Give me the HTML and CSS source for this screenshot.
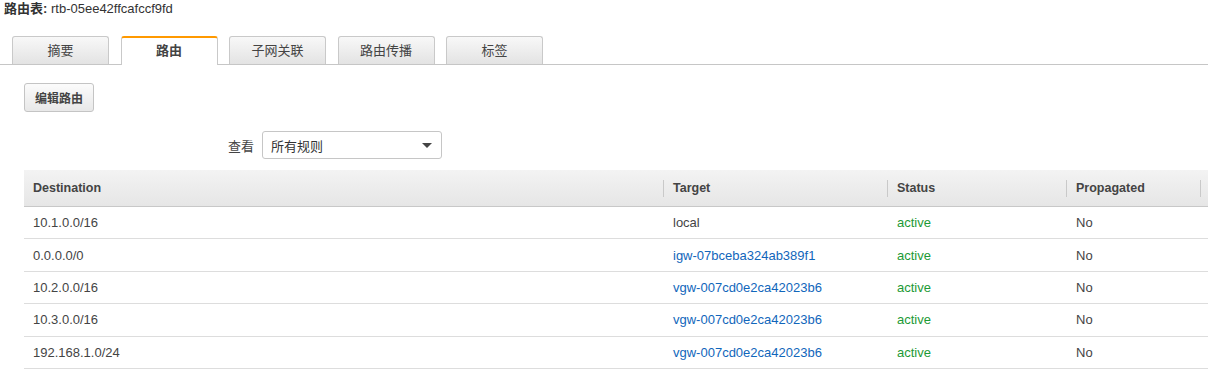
FILE: index.html
```html
<!DOCTYPE html>
<html lang="zh-CN">
<head>
    <meta charset="UTF-8">
    <title>路由表</title>
    <link rel="stylesheet" href="styles.css">
</head>
<body>
    <div class="title"><strong>路由表:</strong> rtb-05ee42ffcafccf9fd</div>

    <!-- Tabs -->
    <div class="tabs">
        <div class="tab">摘要</div>
        <div class="tab active">路由</div>
        <div class="tab">子网关联</div>
        <div class="tab">路由传播</div>
        <div class="tab">标签</div>
    </div>

    <div class="content">
        <button class="btn">编辑路由</button>

        <div class="filter">
            <label>查看</label>
            <div class="select">
                <span>所有规则</span>
                <span class="caret"></span>
            </div>
        </div>

        <table class="routes">
            <colgroup>
                <col style="width: 639px">
                <col style="width: 224px">
                <col style="width: 179px">
                <col style="width: 134px">
                <col>
            </colgroup>
            <thead>
                <tr>
                    <th><div class="th first">Destination</div></th>
                    <th><div class="th">Target</div></th>
                    <th><div class="th">Status</div></th>
                    <th><div class="th">Propagated</div></th>
                    <th><div class="th"></div></th>
                </tr>
            </thead>
            <tbody>
                <tr>
                    <td>10.1.0.0/16</td>
                    <td>local</td>
                    <td class="active">active</td>
                    <td>No</td>
                    <td></td>
                </tr>
                <tr>
                    <td>0.0.0.0/0</td>
                    <td><a href="#">igw-07bceba324ab389f1</a></td>
                    <td class="active">active</td>
                    <td>No</td>
                    <td></td>
                </tr>
                <tr>
                    <td>10.2.0.0/16</td>
                    <td><a href="#">vgw-007cd0e2ca42023b6</a></td>
                    <td class="active">active</td>
                    <td>No</td>
                    <td></td>
                </tr>
                <tr>
                    <td>10.3.0.0/16</td>
                    <td><a href="#">vgw-007cd0e2ca42023b6</a></td>
                    <td class="active">active</td>
                    <td>No</td>
                    <td></td>
                </tr>
                <tr>
                    <td>192.168.1.0/24</td>
                    <td><a href="#">vgw-007cd0e2ca42023b6</a></td>
                    <td class="active">active</td>
                    <td>No</td>
                    <td></td>
                </tr>
            </tbody>
        </table>
    </div>
</body>
</html>
```

FILE: styles.css
```css
body {
    font-family: 'Liberation Sans', Arial, 'Noto Sans CJK SC', sans-serif;
    font-size: 13px;
    color: #444;
    background: #fff;
    margin: 0;
    padding: 0;
}
.title {
    line-height: 18px;
    padding: 0 4px;
    color: #333;
}
.tabs {
    display: flex;
    gap: 11.5px;
    margin-top: 18px;
    padding-left: 12px;
    border-bottom: 1px solid #c6c6c6;
}
.tab {
    width: 95px;
    height: 27px;
    line-height: 27px;
    text-align: center;
    font-size: 13px;
    color: #444;
    border: 1px solid #c9c9c9;
    border-bottom: none;
    border-radius: 3px 3px 0 0;
    background: linear-gradient(#f8f8f8, #e3e3e3);
}
.tab.active {
    background: #fff;
    border-top: 2px solid #f90;
    height: 27px;
    line-height: 26px;
    margin-bottom: -1px;
    font-weight: bold;
}
.content {
    padding-left: 24px;
}
.btn {
    margin-top: 18px;
    height: 29px;
    padding: 0 10px;
    font-family: inherit;
    font-size: 12px;
    font-weight: bold;
    color: #444;
    border: 1px solid #c4c4c4;
    border-radius: 3px;
    background: linear-gradient(#fbfbfb, #e8e8e8);
    display: block;
}
.filter {
    display: flex;
    align-items: center;
    gap: 8px;
    margin-top: 19px;
    margin-left: 204px;
}
.filter label {
    font-size: 13px;
    color: #444;
}
.select {
    height: 26px;
    border: 1px solid #c6c6c6;
    border-radius: 3px;
    display: flex;
    align-items: center;
    justify-content: space-between;
    padding: 0 0 0 8px;
    width: 170px;
    font-size: 13px;
    color: #333;
}
.caret {
    width: 0;
    height: 0;
    border-left: 5px solid transparent;
    border-right: 5px solid transparent;
    border-top: 5px solid #444;
    margin-right: 9px;
}
.routes {
    margin-top: 11px;
    width: 100%;
    border-collapse: collapse;
    table-layout: fixed;
}
.routes thead tr {
    background: linear-gradient(#f3f3f3, #e6e6e6);
    border-bottom: 1px solid #c8c8c8;
}
.routes th {
    padding: 10px 0 9px;
    text-align: left;
    font-size: 12.5px;
    font-weight: bold;
    color: #444;
}
.th {
    border-left: 1px solid #c9c9c9;
    padding-left: 9px;
    line-height: 17px;
    height: 17px;
}
.th.first {
    border-left: none;
}
.routes td {
    height: 31.4px;
    padding: 0 9px 0 10px;
    border-bottom: 1px solid #ddd;
    white-space: nowrap;
}
.routes td:first-child {
    padding-left: 9px;
}
.routes a {
    color: #1166bb;
    text-decoration: none;
}
.routes td.active {
    color: #1d9a36;
}
```
